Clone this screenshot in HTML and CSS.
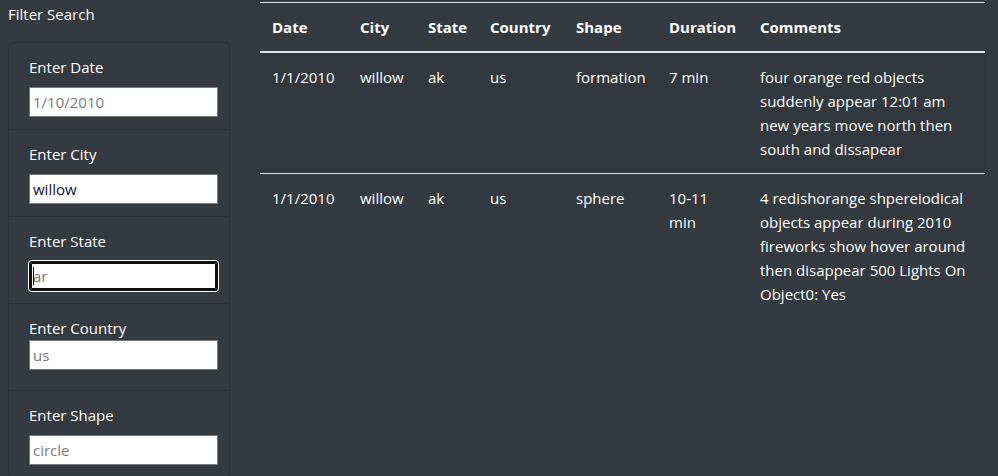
FILE: index.html
```html
<!DOCTYPE html>
<html lang="en">
<head>
<meta charset="utf-8">
<title>UFO Sightings</title>
<link rel="stylesheet" href="styles.css">
</head>
<body>
<div class="layout">
  <aside class="sidebar">
    <div class="sidebar-title">Filter Search</div>
    <ul class="filters">
      <li class="filter">
        <label class="filter-label" for="date">Enter Date</label>
        <input class="filter-input" id="date" type="text" placeholder="1/10/2010">
      </li>
      <li class="filter">
        <label class="filter-label" for="city">Enter City</label>
        <input class="filter-input" id="city" type="text" value="willow">
      </li>
      <li class="filter">
        <label class="filter-label" for="state">Enter State</label>
        <div class="input-wrap">
          <input class="filter-input is-focused" id="state" type="text" placeholder="ar">
          <span class="caret"></span>
        </div>
      </li>
      <li class="filter filter-tight">
        <label class="filter-label" for="country">Enter Country</label>
        <input class="filter-input" id="country" type="text" placeholder="us">
      </li>
      <li class="filter">
        <label class="filter-label" for="shape">Enter Shape</label>
        <input class="filter-input" id="shape" type="text" placeholder="circle">
      </li>
    </ul>
  </aside>
  <main class="content">
    <table class="sightings">
      <colgroup>
        <col class="c-date"><col class="c-city"><col class="c-state"><col class="c-country"><col class="c-shape"><col class="c-duration"><col class="c-comments">
      </colgroup>
      <thead>
        <tr>
          <th>Date</th><th>City</th><th>State</th><th>Country</th><th>Shape</th><th>Duration</th><th>Comments</th>
        </tr>
      </thead>
      <tbody>
        <tr class="striped">
          <td>1/1/2010</td><td>willow</td><td>ak</td><td>us</td><td>formation</td><td>7 min</td>
          <td>four orange red objects suddenly appear 12:01 am new years move north then south and dissapear</td>
        </tr>
        <tr>
          <td>1/1/2010</td><td>willow</td><td>ak</td><td>us</td><td>sphere</td><td>10-11 min</td>
          <td>4 redishorange shpereiodical objects appear during 2010 fireworks show hover around then disappear 500 Lights On Object0: Yes</td>
        </tr>
      </tbody>
    </table>
  </main>
</div>
</body>
</html>
```

FILE: styles.css
```css
* { box-sizing: border-box; }

html, body {
  margin: 0;
  padding: 0;
  background: #343a40;
  color: #ffffff;
  font-family: "Open Sans", "Noto Sans", sans-serif;
  font-size: 15px;
  line-height: 24px;
  overflow: hidden;
}

.layout {
  display: flex;
  align-items: flex-start;
  height: 476px;
}

.sidebar {
  width: 260px;
  flex: 0 0 260px;
  padding: 2px 0 0 8px;
}

.sidebar-title {
  line-height: 24px;
}

.filters {
  list-style: none;
  margin: 16px 0 0 0;
  padding: 0;
  width: 222px;
  border: 1px solid #2d3237;
  border-radius: 4px;
}

.filter {
  padding: 12px 11px 12px 20px;
  border-top: 1px solid #2d3237;
}

.filter:first-child { border-top: 0; }

.filter-label {
  display: block;
  line-height: 24px;
  margin-bottom: 8px;
  color: #ffffff;
}

.filter-tight { padding-bottom: 20px; }
.filter-tight .filter-label { margin-bottom: 0; }

.input-wrap { position: relative; }

.filter-input {
  display: block;
  width: 100%;
  height: 30px;
  margin: 0;
  padding: 1px 3px;
  border: 1px solid #767676;
  border-radius: 0;
  background: #ffffff;
  color: #101035;
  font-family: "Open Sans", "Noto Sans", sans-serif;
  font-size: 15px;
  outline: none;
}

.filter-input::placeholder { color: #7a7a7a; }

.filter-input.is-focused {
  padding: 0 2px;
  border: 2px solid #101010;
  border-radius: 3px;
  box-shadow: inset 0 0 0 1px #101010, 0 0 0 1px #ffffff;
}

.caret {
  position: absolute;
  left: 4px;
  top: 6px;
  width: 1px;
  height: 18px;
  background: #000;
}

.content {
  flex: 1 1 auto;
  padding-top: 2px;
}

.sightings {
  width: 725px;
  border-collapse: collapse;
  table-layout: fixed;
  border-top: 1px solid #dee2e6;
}

.c-date { width: 88px; }
.c-city { width: 68px; }
.c-state { width: 62px; }
.c-country { width: 86px; }
.c-shape { width: 93px; }
.c-duration { width: 91px; }
.c-comments { width: 237px; }

.sightings th,
.sightings td {
  padding: 12px;
  text-align: left;
  vertical-align: top;
  line-height: 24px;
}

.sightings th {
  font-weight: 700;
  border-bottom: 2px solid #dee2e6;
}

.sightings tbody tr { border-bottom: 1px solid #dee2e6; }
.sightings tbody tr:last-child { border-bottom: 0; }

.striped { background: rgba(0, 0, 0, 0.02); }
```
